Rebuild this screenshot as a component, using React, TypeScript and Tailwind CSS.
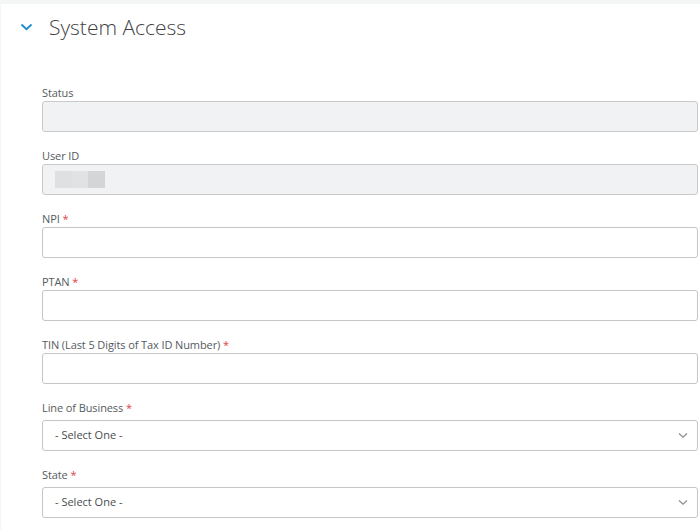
import React from "react";

const font = { fontFamily: '"Open Sans", "Noto Sans", Arial, sans-serif' };

function Label({ text, required }: { text: string; required?: boolean }) {
  return (
    <div className="text-[11px] leading-[15px] text-[#555b60] tracking-[-0.1px]">
      {text}
      {required && <span className="text-[#e0443e]"> *</span>}
    </div>
  );
}

function Chevron() {
  return (
    <svg width="10" height="7" viewBox="0 0 10 7" fill="none">
      <path d="M1 1.5 L5 5.2 L9 1.5" stroke="#8a8d90" strokeWidth="1.2" />
    </svg>
  );
}

export default function App() {
  return (
    <div style={font} className="w-[700px] h-[530px] overflow-hidden bg-[#f4f6f6] pt-[4px] pl-px">
      <div className="bg-white h-full">
        <div className="flex items-center h-[45px] pl-[19px]">
          <svg width="13" height="8" viewBox="0 0 13 8" fill="none" className="mr-[16px] mt-[1px]">
            <path d="M1.5 1.5 L6.5 6.2 L11.5 1.5" stroke="#1a8ad4" strokeWidth="1.8" />
          </svg>
          <span className="text-[21px] leading-[28px] font-light text-[#3f4245]">System Access</span>
        </div>

        <div className="pl-[41px] pr-[2px] pt-[36px] flex flex-col">
          <div className="flex flex-col gap-[1px] mb-[16px]">
            <Label text="Status" />
            <div className="h-[31px] rounded-[3px] border border-[#c9cacb] bg-[#f1f2f3]" />
          </div>
          <div className="flex flex-col gap-[1px] mb-[16px]">
            <Label text="User ID" />
            <div className="h-[31px] rounded-[3px] border border-[#c9cacb] bg-[#f1f2f3] flex items-center pl-[12px]">
              <div className="flex h-[17px]">
                <div className="w-[17px] bg-[#dfe0e2]" />
                <div className="w-[16px] bg-[#e1e2e4]" />
                <div className="w-[17px] bg-[#d3d5d7]" />
              </div>
            </div>
          </div>
          <div className="flex flex-col gap-[1px] mb-[16px]">
            <Label text="NPI" required />
            <div className="h-[31px] rounded-[3px] border border-[#c4c5c6] bg-white" />
          </div>
          <div className="flex flex-col gap-[1px] mb-[16px]">
            <Label text="PTAN" required />
            <div className="h-[31px] rounded-[3px] border border-[#c4c5c6] bg-white" />
          </div>
          <div className="flex flex-col gap-[1px] mb-[16px]">
            <Label text="TIN (Last 5 Digits of Tax ID Number)" required />
            <div className="h-[31px] rounded-[3px] border border-[#c4c5c6] bg-white" />
          </div>
          <div className="flex flex-col gap-[5px] mb-[16px]">
            <Label text="Line of Business" required />
            <div className="h-[31px] rounded-[3px] border border-[#c4c5c6] bg-white flex items-center justify-between pl-[12px] pr-[9px]">
              <span className="text-[11px] text-[#4a4d50]">- Select One -</span>
              <Chevron />
            </div>
          </div>
          <div className="flex flex-col gap-[5px] mb-[16px]">
            <Label text="State" required />
            <div className="h-[31px] rounded-[3px] border border-[#c4c5c6] bg-white flex items-center justify-between pl-[12px] pr-[9px]">
              <span className="text-[11px] text-[#4a4d50]">- Select One -</span>
              <Chevron />
            </div>
          </div>
        </div>
      </div>
    </div>
  );
}
